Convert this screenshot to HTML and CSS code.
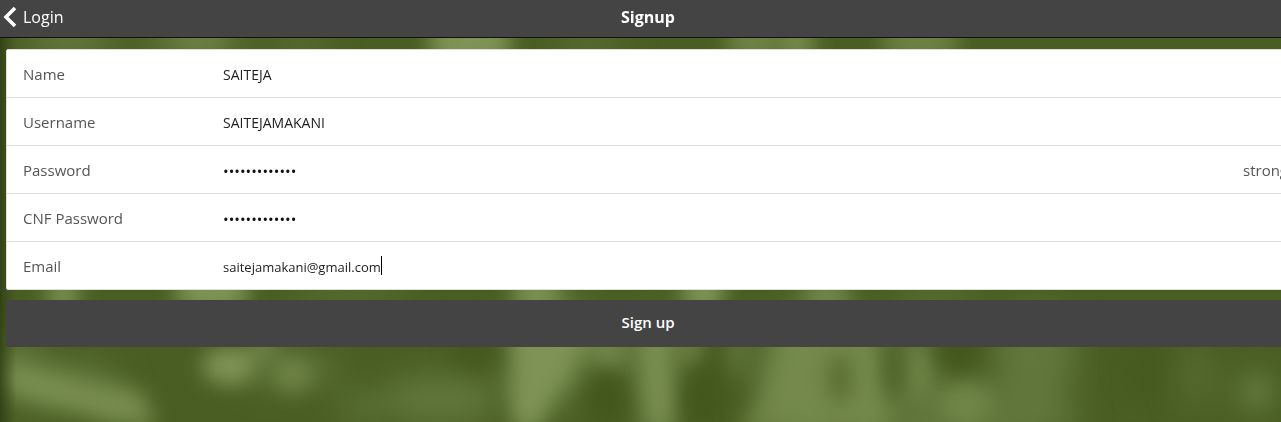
FILE: index.html
```html
<!DOCTYPE html>
<html lang="en">
<head>
<meta charset="utf-8">
<title>Signup</title>
<link rel="stylesheet" href="styles.css">
</head>
<body>
<div class="app">
  <svg class="backdrop" viewBox="0 0 1296 422" preserveAspectRatio="none" aria-hidden="true">
    <defs>
      <filter id="soft" x="-20%" y="-40%" width="140%" height="180%" color-interpolation-filters="sRGB"><feGaussianBlur stdDeviation="10"/></filter>
      <filter id="wide" x="-20%" y="-40%" width="140%" height="180%" color-interpolation-filters="sRGB"><feGaussianBlur stdDeviation="16"/></filter>
      <linearGradient id="edge"><stop offset="0" stop-color="#263410" stop-opacity=".65"/><stop offset="1" stop-color="#304016" stop-opacity="0"/></linearGradient>
    </defs>
    <rect width="1296" height="422" fill="#4a5e23"/>
    <g fill="#61773b" filter="url(#wide)">
      <ellipse cx="60" cy="385" rx="60" ry="24"/>
      <ellipse cx="20" cy="360" rx="20" ry="30"/>
      <ellipse cx="290" cy="370" rx="50" ry="16"/>
      <ellipse cx="440" cy="400" rx="60" ry="26"/>
      <ellipse cx="360" cy="408" rx="20" ry="14"/>
      <ellipse cx="550" cy="350" rx="50" ry="60"/>
      <ellipse cx="655" cy="370" rx="28" ry="60"/>
      <ellipse cx="820" cy="370" rx="70" ry="70"/>
      <ellipse cx="915" cy="350" rx="22" ry="40"/>
      <ellipse cx="950" cy="416" rx="130" ry="34"/>
      <ellipse cx="1035" cy="355" rx="42" ry="50"/>
      <ellipse cx="1195" cy="375" rx="18" ry="36" opacity=".5"/>
      <ellipse cx="1255" cy="392" rx="24" ry="24" opacity=".7"/>
      <ellipse cx="70" cy="40" rx="45" ry="24"/>
      <ellipse cx="195" cy="40" rx="50" ry="26"/>
      <ellipse cx="300" cy="40" rx="30" ry="18" opacity=".6"/>
      <ellipse cx="590" cy="40" rx="35" ry="18" opacity=".6"/>
      <ellipse cx="350" cy="294" rx="60" ry="16" opacity=".6"/>
      <ellipse cx="940" cy="294" rx="40" ry="16" opacity=".6"/>
    </g>
    <g fill="#7e9355" filter="url(#soft)">
      <path d="M5 360L30 368 60 376 90 384 125 386 145 394 155 428 110 424 75 410 40 402 5 390Z" opacity=".85"/>
      <ellipse cx="229" cy="366" rx="27" ry="19"/>
      <ellipse cx="293" cy="375" rx="18" ry="17" opacity=".6"/>
      <ellipse cx="264" cy="346" rx="14" ry="14" opacity=".7"/>
      <ellipse cx="63" cy="294" rx="17" ry="20" opacity=".9"/>
      <ellipse cx="212" cy="292" rx="38" ry="22"/>
      <path d="M508 325H592L572 372 552 400 540 430 514 430 510 400 513 365Z"/>
      <ellipse cx="609" cy="348" rx="20" ry="24" opacity=".7"/>
      <path d="M638 325H670L670 370 675 398 674 430 646 430 643 385Z" opacity=".85"/>
      <ellipse cx="692" cy="344" rx="14" ry="24" opacity=".6"/>
      <ellipse cx="735" cy="350" rx="9" ry="24" opacity=".5"/>
      <path d="M780 325L875 325 882 365 890 430 735 434 762 396 772 365Z" opacity=".65"/>
      <ellipse cx="919" cy="372" rx="12" ry="28" opacity=".55"/>
      <ellipse cx="966" cy="403" rx="26" ry="22" opacity=".55"/>
      <ellipse cx="537" cy="293" rx="24" ry="22" opacity=".9"/>
      <ellipse cx="703" cy="293" rx="22" ry="22"/>
      <ellipse cx="826" cy="294" rx="24" ry="20" opacity=".7"/>
      <ellipse cx="1257" cy="392" rx="12" ry="14" opacity=".35"/>
      <ellipse cx="200" cy="38" rx="26" ry="20" opacity=".35"/>
      <ellipse cx="470" cy="42" rx="42" ry="28"/>
      <ellipse cx="752" cy="42" rx="26" ry="22" opacity=".7"/>
      <ellipse cx="797" cy="42" rx="18" ry="24" opacity=".8"/>
      <ellipse cx="920" cy="42" rx="40" ry="22" opacity=".65"/>
    </g>
    <g fill="#43571d" filter="url(#soft)">
      <ellipse cx="606" cy="399" rx="22" ry="28"/>
      <ellipse cx="703" cy="398" rx="20" ry="32"/>
      <ellipse cx="714" cy="350" rx="8" ry="24" opacity=".6"/>
      <ellipse cx="478" cy="352" rx="26" ry="18" opacity=".8"/>
      <ellipse cx="840" cy="378" rx="12" ry="26" opacity=".55"/>
      <ellipse cx="893" cy="370" rx="9" ry="30" opacity=".7"/>
      <ellipse cx="958" cy="350" rx="22" ry="20" opacity=".9"/>
      <ellipse cx="1145" cy="365" rx="25" ry="38" opacity=".5"/>
    </g>
    <rect width="16" height="422" fill="url(#edge)"/>
  </svg>
  <header class="bar">
    <a class="back" href="#login">
      <svg class="chevron" viewBox="0 0 14 22" aria-hidden="true"><path d="M12 2L3 11L12 20" fill="none" stroke="#fff" stroke-width="3.6"/></svg>
      <span>Login</span>
    </a>
    <h1 class="title">Signup</h1>
  </header>
  <form class="form">
    <div class="card">
      <div class="row"><label class="label" for="name">Name</label><input class="field" id="name" type="text" value="SAITEJA"></div>
      <div class="row"><label class="label" for="user">Username</label><input class="field" id="user" type="text" value="SAITEJAMAKANI"></div>
      <div class="row"><label class="label" for="pass">Password</label><input class="field secret" id="pass" type="password" value="saitejamakani"><output class="strength" for="pass">strong</output></div>
      <div class="row"><label class="label" for="confirm">CNF Password</label><input class="field secret" id="confirm" type="password" value="saitejamakani"></div>
      <div class="row"><label class="label" for="email">Email</label><input class="field fit" id="email" type="email" value="saitejamakani@gmail.com"><span class="caret"></span></div>
    </div>
    <button class="submit" type="button">Sign up</button>
  </form>
</div>
</body>
</html>
```
FILE: styles.css
```css
* {
  box-sizing: border-box;
}

body {
  margin: 0;
  overflow: hidden;
  background: #4a5f24;
  font-family: "Open Sans", "Noto Sans", sans-serif;
  font-size: 15px;
}

/* The view runs under the width of a scrollbar at the right. */
.app {
  position: relative;
  width: calc(100% + 15px);
  min-height: 100vh;
}

.backdrop {
  position: absolute;
  inset: 0;
  z-index: -1;
  width: 100%;
  height: 100%;
}

.bar {
  display: grid;
  grid-template-columns: 1fr auto 1fr;
  align-items: center;
  height: 38px;
  padding: 0 3px 3px;
  border-bottom: 1px solid #111;
  background: #444;
  color: #fff;
}

.back {
  display: flex;
  align-items: center;
  gap: 6px;
  color: inherit;
  font-size: 16px;
  text-decoration: none;
}

.chevron {
  width: 14px;
  height: 22px;
}

.title {
  margin: 0;
  font-size: 16px;
  font-weight: 700;
}

.form {
  display: grid;
  gap: 10px;
  padding: 11px 6px;
}

.card {
  border: 1px solid #ddd;
  border-radius: 2px;
  background: #fff;
}

.row {
  display: flex;
  align-items: center;
  height: 48px;
  padding: 0 1px 0 16px;
  border-bottom: 1px solid #ddd;
}

.row:last-child {
  height: 47px;
  border-bottom: 0;
}

.label {
  width: 200px;
  flex: none;
  color: #555;
}

.field {
  flex: 1;
  min-width: 0;
  padding: 2px 0 0;
  border: 0;
  outline: 0;
  background: none;
  color: #222;
  font: inherit;
  font-size: 14px;
}

.fit {
  flex: none;
  field-sizing: content;
  font-size: 13px;
}

.secret {
  color: #111;
  font-size: 15px;
}

.caret {
  width: 1px;
  height: 19px;
  background: #000;
}

.strength {
  color: #555;
}

.submit {
  height: 47px;
  padding: 0 0 3px;
  border: 0;
  border-radius: 3px;
  background: #444;
  color: #fff;
  font: inherit;
  font-weight: 600;
}
```
